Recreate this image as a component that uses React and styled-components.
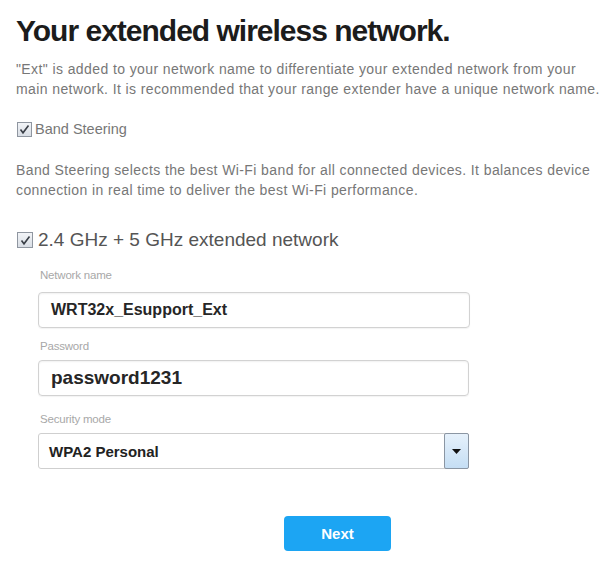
import React from "react"
import styled, { createGlobalStyle } from "styled-components"

const GlobalStyle = createGlobalStyle`
    html, body {
        margin: 0;
        padding: 0;
        background: #fff;
    }
    body {
        font-family: "Liberation Sans", Arial, sans-serif;
        color: #222;
    }
`

const Page = styled.div`
    width: 612px;
    height: 576px;
    box-sizing: border-box;
    padding: 14px 16px 0 16px;
    display: flex;
    flex-direction: column;
`

const Title = styled.h1`
    margin: 0;
    font-size: 30px;
    line-height: 34px;
    font-weight: bold;
    letter-spacing: -1px;
    color: #1c1c1c;
`

const Text = styled.p`
    margin: ${props => props.top || 0}px 0 0 0;
    font-size: 14px;
    line-height: 19.5px;
    letter-spacing: 0.4px;
    color: #777;
    width: 584px;
`

const CheckRow = styled.label`
    display: flex;
    align-items: center;
    gap: ${props => props.large ? 5 : 3}px;
    margin-top: ${props => props.top}px;
    font-size: ${props => props.large ? 19 : 14.5}px;
    line-height: 20px;
    color: ${props => props.large ? "#555" : "#777"};
`

const Box = styled.span`
    display: inline-flex;
    align-items: center;
    justify-content: center;
    width: ${props => props.large ? 14 : 13}px;
    height: ${props => props.large ? 14 : 13}px;
    border: 1px solid #8f96a0;
    background: linear-gradient(#f2f4f7, #d9dee5);
    margin-left: 1px;
`

const CheckBox = ({ large }) => (
    <Box large={large}>
        <svg width="11" height="11" viewBox="0 0 11 11">
            <path d="M1.5 5.5 L4 8.8 L9.5 1.5" fill="none" stroke="#3a3f47" strokeWidth="1.6" />
        </svg>
    </Box>
)

const Form = styled.div`
    margin-top: 3px;
    margin-left: 22px;
    width: 432px;
    display: flex;
    flex-direction: column;
`

const Label = styled.div`
    font-size: 11.5px;
    line-height: 14px;
    color: #a8a8a8;
    margin-top: ${props => props.top}px;
    margin-left: 2px;
    letter-spacing: -0.2px;
`

const Input = styled.div`
    box-sizing: border-box;
    height: 36px;
    margin-top: ${props => props.top || 6}px;
    width: ${props => props.width || 432}px;
    border: 1px solid #d2d2d2;
    border-radius: 4px;
    box-shadow: inset 0 1px 2px rgba(0, 0, 0, 0.06), 0 1px 1px rgba(0, 0, 0, 0.05);
    display: flex;
    align-items: center;
    padding-left: 12px;
    font-weight: bold;
    font-size: ${props => props.size || 16}px;
    color: #262626;
`

const Select = styled.div`
    box-sizing: border-box;
    height: 36px;
    margin-top: 7px;
    width: 431px;
    border: 1px solid #cfcfcf;
    border-radius: 3px;
    display: flex;
    align-items: stretch;
    font-weight: bold;
    font-size: 15px;
    color: #222;
`

const SelectValue = styled.div`
    flex: 1;
    display: flex;
    align-items: center;
    padding-left: 10px;
`

const Arrow = styled.div`
    width: 23px;
    border: 1px solid #8b96a3;
    border-radius: 2px;
    background: linear-gradient(#e6f1fb, #c5def4);
    display: flex;
    align-items: center;
    justify-content: center;
    margin: -1px -1px -1px 0;
`

const Actions = styled.div`
    margin-top: 47px;
    padding-left: 268px;
`

const Button = styled.button`
    width: 107px;
    height: 35px;
    border: none;
    border-radius: 4px;
    background: #1ca5f3;
    color: #fff;
    font-family: "Liberation Sans", Arial, sans-serif;
    font-weight: bold;
    font-size: 15px;
    cursor: pointer;
`

export default function App() {
    return (
        <>
            <GlobalStyle />
            <Page>
                <Title>Your extended wireless network.</Title>
                <Text top={12}>
                    "Ext" is added to your network name to differentiate your extended network from your main network. It is recommended that your range extender have a unique network name.
                </Text>
                <CheckRow top={20}>
                    <CheckBox />
                    Band Steering
                </CheckRow>
                <Text top={22}>
                    Band Steering selects the best Wi-Fi band for all connected devices. It balances device connection in real time to deliver the best Wi-Fi performance.
                </Text>
                <CheckRow large top={30}>
                    <CheckBox large />
                    2.4 GHz + 5 GHz extended network
                </CheckRow>
                <Form>
                    <Label top={15}>Network name</Label>
                    <Input top={10}>WRT32x_Esupport_Ext</Input>
                    <Label top={11}>Password</Label>
                    <Input width={431} size={19} top={7}>password1231</Input>
                    <Label top={16}>Security mode</Label>
                    <Select>
                        <SelectValue>WPA2 Personal</SelectValue>
                        <Arrow>
                            <svg width="9" height="5" viewBox="0 0 9 5">
                                <path d="M0 0 H9 L4.5 5 Z" fill="#111" />
                            </svg>
                        </Arrow>
                    </Select>
                </Form>
                <Actions>
                    <Button>Next</Button>
                </Actions>
            </Page>
        </>
    )
}
